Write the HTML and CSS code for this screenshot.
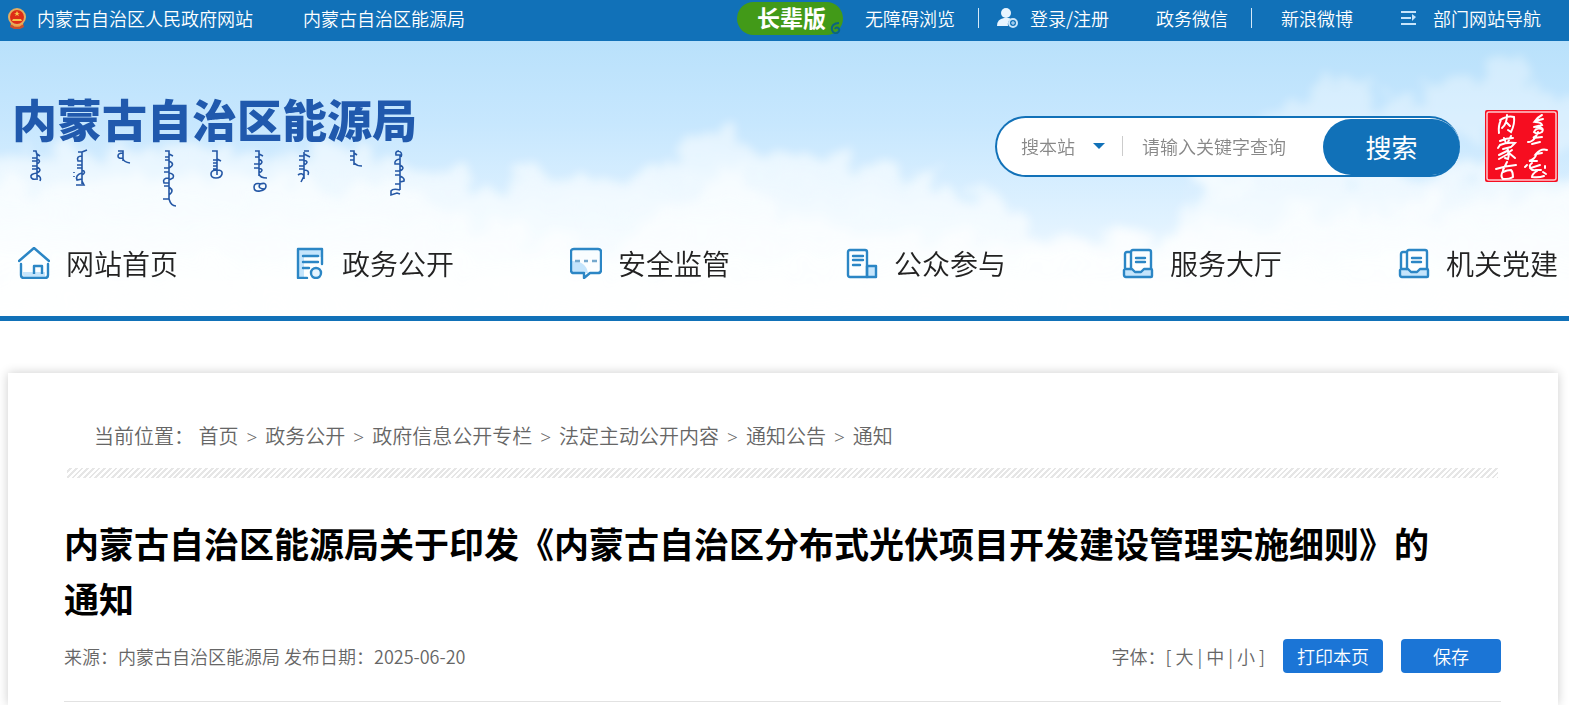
FILE: index.html
```
<!DOCTYPE html>
<html lang="zh-CN">
<head>
<meta charset="utf-8">
<title>内蒙古自治区能源局</title>
<link rel="stylesheet" href="styles.css">
</head>
<body>
    <div class="topbar">
        <svg class="emblem" viewBox="0 0 20 21">
            <path d="M4 15h12l1 4-4 2H7l-4-2z" fill="#c8502d"/>
            <circle cx="10" cy="9" r="9" fill="#e3ad62"/>
            <circle cx="10" cy="9" r="7" fill="#dd2c17"/>
            <path d="M10 3l1 2h2l-2 1 1 2-2-1-2 1 1-2-2-1h2zM6 11h8l1 2H5z" fill="#f6c34b"/>
            <path d="M4 16q6 4 12 0M7 18h6" fill="none" stroke="#f0a54a"/>
        </svg>
        <a class="gov" href="#">内蒙古自治区人民政府网站</a>
        <a class="bureau" href="#">内蒙古自治区能源局</a>
        <div class="toplinks">
            <a class="elder" href="#">长辈版
                <svg class="elder-mark" viewBox="0 0 12 12"><path d="M9 1C4 1 1 4 2 8s6 4 7 1-3-5-4-2" fill="none" stroke="#0b6480" stroke-width="2"/></svg>
            </a>
            <a class="barrier" href="#">无障碍浏览</a>
            <span class="bar"></span>
            <a class="login" href="#">
                <svg class="user-icon" viewBox="0 0 21 20">
                    <circle cx="9" cy="5" r="5" fill="#e8f5ff"/>
                    <path d="M0 18q0-7 7-8h4q2 0 3 1-4 2-3 7z" fill="#e8f5ff"/>
                    <circle cx="16" cy="15" r="4" fill="#1171b8" stroke="#cbe6fa" stroke-width="2"/>
                    <path d="M14 15h4M16 13v4" stroke="#cbe6fa"/>
                </svg>登录/注册</a>
            <a class="wechat" href="#">政务微信</a>
            <span class="bar"></span>
            <a class="weibo" href="#">新浪微博</a>
            <a class="sites" href="#">
                <svg class="menu-icon" viewBox="0 0 17 16"><path d="M1 2h15M1 8h10M1 14h15" stroke="#c8e5fb" stroke-width="2"/><path d="M12 4l4 3-4 4z" fill="#c8e5fb"/></svg>部门网站导航</a>
        </div>
    </div>

    <header class="header">
        <svg class="sky" viewBox="0 0 1569 275" preserveAspectRatio="none">
            <defs>
                <linearGradient id="air" x1="0" y1="0" x2="0" y2="1">
                    <stop offset="0" stop-color="#b9e1fb"/>
                    <stop offset=".3" stop-color="#c7e7fe"/>
                    <stop offset=".65" stop-color="#e0f2ff"/>
                    <stop offset="1" stop-color="#ffffff"/>
                </linearGradient>
                <linearGradient id="mist" x1="0" y1="0" x2="0" y2="1">
                    <stop offset="0" stop-color="#ffffff" stop-opacity=".45"/>
                    <stop offset=".4" stop-color="#fafdff" stop-opacity=".75"/>
                    <stop offset="1" stop-color="#ffffff"/>
                </linearGradient>
                <filter id="puff" x="-5%" y="-20%" width="110%" height="140%">
                    <feTurbulence type="fractalNoise" baseFrequency=".035" numOctaves="5" seed="6" result="noise"/>
                    <feDisplacementMap in="SourceGraphic" in2="noise" scale="60" xChannelSelector="R" yChannelSelector="G"/>
                    <feGaussianBlur stdDeviation="5"/>
                </filter>
            </defs>
            <rect width="1569" height="275" fill="url(#air)"/>
            <g filter="url(#puff)">
                <path d="M-40 120L80 112 200 106 290 114 350 104 400 118 450 128 490 150 540 132 580 128 640 142 680 100 700 98 725 90 760 112 800 112 860 122 900 132 960 150 1000 156 1040 196 1180 190 1200 140 1280 110 1340 136 1400 130 1620 130V310H-40z" fill="url(#mist)"/>
                <path d="M1200 150L1240 100 1270 68 1330 46 1390 58 1440 50 1490 28 1520 20 1540 50 1600 60V110L1480 90 1400 110 1300 130z" fill="#fff" opacity=".35"/>
                <path d="M-40 150L200 130 420 150 500 190 620 205 680 150 740 130 800 180 1060 210 1240 180 1620 150V320H-40z" fill="#fff" opacity=".45"/>
            </g>
        </svg>

        <div class="masthead">
            <a class="logo" href="#">
                <span class="logo-name">内蒙古自治区能源局</span>
                <svg class="logo-script" viewBox="0 0 420 60" fill="none" stroke="#2457a5" stroke-width="1.6">
                    <path d="M33 3h3l1 4v25M37 6l3 2M32 10h5M32 13h5M37 11q5 2 0 5M32 18h5M32 21h5M37 19q6 3 0 6M37 25q-7 1-6 4t5 2M37 27q5 2 3 6"/>
                    <path d="M78 4h4v32M82 4l5-2M82 8q-6 0-4 5h4M77 17h5M77 20h5M82 22q5 2 0 5M82 25q-7 2-5 7l5-1M76 37h8l-2-4M74 24v1M74 28v1"/>
                    <path d="M118 3h5v10M123 5q-5 0-5 3t5 2M123 11q1 3 7 4"/>
                    <path d="M165 3h4v48M169 6l4 2M165 9h4M165 12h4M169 13q7 3 0 7M164 20h5M164 24h5M169 25q6 1 4 5l-4 2M169 30q-7 0-5 5h5M164 38h5M169 39q6 4 0 8M163 51h6q2 7 7 7"/>
                    <path d="M212 3h5v24M217 5v6l4 2M213 12h4M213 15h4M213 18h4M213 21h4M217 22q-6 0-6 4t5 4 6-4-5-4"/>
                    <path d="M255 3h4v25M259 6l4 2M255 9h4M259 11q6 3 0 6M254 16h5M254 20h5M259 20q6 2 0 5M259 26q1 4 8 4M262 36q-8-2-8 3t6 4 6-5-6-2q-3 5 5 5"/>
                    <path d="M304 3h5M304 4v27M304 6l6 3M299 8h5M299 12h5M304 12q6 2 0 5M299 18h5M299 21h5M304 22q6 0 4 5M298 27q4-3 6 1l-3 6"/>
                    <path d="M350 3h4v14M354 5l3 2M350 8h4M350 12h4M354 15q3 3 8 3"/>
                    <path d="M399 3q-4 0-3 4h4v35M398 3q5 1 3 6M400 11q-6 1-5 5h5M400 17q6 3 0 6M395 23h5M395 27h5M400 28q5 2 4 5l-4 1M395 36h5M400 42q-7-2-9 1v4l6-2 3 1"/>
                </svg>
            </a>
            <div class="tools">
                <form class="search">
                    <span class="scope">
                        <select aria-label="搜索范围">
                            <option>搜本站</option>
                        </select>
                    </span>
                    <input type="text" placeholder="请输入关键字查询" aria-label="关键字">
                    <button type="button">搜索</button>
                </form>
                <svg class="seal" viewBox="0 0 73 72" fill="none" stroke="#fff" stroke-linecap="round">
                    <rect width="73" height="72" rx="2" fill="#f60d20" stroke="none"/>
                    <rect x="2" y="2" width="69" height="68" rx="2" stroke="#ffc9cd" stroke-width="1.5"/>
                    <!-- left column -->
                    <path stroke-width="2" d="M16 10q-3 6-2 13M15 10q8-5 14-3 1 7-3 15l-3-2M22 5q0 9-5 13M21 12l4 4"/>
                    <path stroke-width="2" d="M15 31q6-3 13-3M19 28l2 5M26 26l-3 6M15 35l-2 3M15 35q7-3 15-2l-3 3M18 39l8-2M22 38q3 5 1 11l-3-1M22 41l-8 4M23 44l-9 5M27 40l-4 3M24 43l6 5"/>
                    <path stroke-width="2" d="M11 59q9-3 20-4M22 52l-4 8M18 61q-3 5 0 8 7 0 10-2 0-5-2-7-4 0-8 2"/>
                    <!-- right column -->
                    <path stroke-width="2" d="M57 5q-4 2-7 6l8-2M50 12q6 0 7 3l-8 2M51 17q9 0 6 5-5 3-8 0 2-5 8-3M53 22q-1 4-5 6l9-1M50 28q-3 4-7 4M47 34l8-2"/>
                    <path stroke-width="2" d="M62 40q-6-2-11 4l6-1M51 45q-1 4-7 6l8 0M47 53q-4 3-1 5l9-3M45 58q2 3 6 2l5 0M42 55l-2 2M52 61q-5 3-5 6 7 1 12-1M60 56v2M58 62l3 2"/>
                </svg>
            </div>
        </div>

        <nav class="nav">
            <a href="#">
                <svg viewBox="0 0 32 32" fill="none" stroke="#2b86c5" stroke-width="2.4" stroke-linecap="round" stroke-linejoin="round">
                    <path d="M5 25h22v5H7q-2 0-2-3z" fill="#c5e5fc" stroke="none"/>
                    <path d="M1 14L16 1l15 13M3 17v11q0 3 3 3h21q3 0 3-3V17"/><path d="M16 27v-8h8v8" stroke-linecap="butt"/>
                </svg>网站首页</a>
            <a href="#">
                <svg viewBox="0 0 32 32" fill="none" stroke="#2b86c5" stroke-width="2.4" stroke-linecap="round" stroke-linejoin="round">
                    <path d="M5 3h5v27H5z" fill="#c5e5fc" stroke="none"/><path d="M6 2h22v8H6z" fill="#c5e5fc" stroke="none"/>
                    <path d="M28 17V2H4v29h9M9 9h15M9 15h15M9 21h6"/><circle cx="22" cy="26" r="5" fill="#e5f4ff"/>
                </svg>政务公开</a>
            <a href="#">
                <svg viewBox="0 0 32 32" fill="none" stroke="#2b86c5" stroke-width="2.4" stroke-linejoin="round">
                    <path d="M2 14q14 0 16 12h-4l-1 4v-4H2z" fill="#c5e5fc" stroke="none"/>
                    <path d="M4 2h24q3 0 3 3v18q0 3-3 3H20l-6 5v-5H4q-3 0-3-3V5q0-3 3-3z"/><path d="M5 14h5M14 14h4M22 14h5" stroke="#76a9cd"/>
                </svg>安全监管</a>
            <a href="#">
                <svg viewBox="0 0 32 32" fill="none" stroke="#2b86c5" stroke-width="2.4" stroke-linecap="round" stroke-linejoin="round">
                    <path d="M21 19h9v11h-9z" fill="#c5e5fc"/>
                    <path d="M4 3h15q2 0 2 2v25H4q-2 0-2-2V5q0-2 2-2zM7 9h10M7 13h10M7 18h7"/>
                </svg>公众参与</a>
            <a href="#">
                <svg viewBox="0 0 32 32" fill="none" stroke="#2b86c5" stroke-width="2.4" stroke-linecap="round" stroke-linejoin="round">
                    <path d="M3 22h7l3 3h6l3-3h7q1 0 1 1v6q0 1-1 1H4q-2 0-2-2v-5z" fill="#c5e5fc"/>
                    <path d="M9 22V5q0-2 2-2h16q2 0 2 2v16M3 21V7q0-2 2-2h4M14 11h9M14 15h9"/>
                </svg>服务大厅</a>
            <a href="#">
                <svg viewBox="0 0 32 32" fill="none" stroke="#2b86c5" stroke-width="2.4" stroke-linecap="round" stroke-linejoin="round">
                    <path d="M3 22h7l3 3h6l3-3h7q1 0 1 1v6q0 1-1 1H4q-2 0-2-2v-5z" fill="#c5e5fc"/>
                    <path d="M9 22V5q0-2 2-2h16q2 0 2 2v16M3 21V7q0-2 2-2h4M14 11h9M14 15h9"/>
                </svg>机关党建</a>
        </nav>
    </header>

    <main class="article">
        <div class="crumbs">
            <span class="crumbs-label">当前位置：</span>
            <a href="#">首页</a><i>&gt;</i><a href="#">政务公开</a><i>&gt;</i><a href="#">政府信息公开专栏</a><i>&gt;</i><a href="#">法定主动公开内容</a><i>&gt;</i><a href="#">通知公告</a><i>&gt;</i><a href="#">通知</a>
        </div>
        <div class="hatch"></div>
        <h1>内蒙古自治区能源局关于印发《内蒙古自治区分布式光伏项目开发建设管理实施细则》的通知</h1>
        <div class="meta">
            <span>来源：内蒙古自治区能源局 发布日期：2025-06-20</span>
            <div class="actions">
                <span>字体：[ <a href="#">大</a> | <a href="#">中</a> | <a href="#">小</a> ]</span>
                <button type="button">打印本页</button>
                <button type="button">保存</button>
            </div>
        </div>
    </main>
</body>
</html>
```
FILE: styles.css
```
* {
    box-sizing: border-box;
}

body {
    margin: 0;
    min-height: 100vh;
    display: flex;
    flex-direction: column;
    font-family: "Noto Sans CJK SC", sans-serif;
    font-weight: 350;
    font-size: 18px;
    color: #666;
    background-color: #fff;
}

a {
    color: inherit;
    text-decoration: none;
}

button, input, select {
    font-family: inherit;
    font-weight: inherit;
    border: none;
    padding: 0;
}

button {
    cursor: pointer;
}

.topbar {
    display: flex;
    align-items: center;
    height: 41px;
    padding: 0 28px 5px 7px;
    background-color: #1171b8;
    color: #fff;
    white-space: nowrap;
}

.emblem {
    width: 20px;
    height: 21px;
    margin-right: 10px;
}

.bureau {
    margin-left: 50px;
}

.toplinks {
    display: flex;
    align-items: center;
    margin-left: auto;
}

.elder {
    position: relative;
    width: 106px;
    height: 33px;
    padding-left: 20px;
    border-radius: 17px;
    background-color: #429a18;
    font-size: 23px;
    font-weight: 700;
    line-height: 30px;
}

.elder-mark {
    position: absolute;
    right: 1px;
    bottom: 1px;
    width: 12px;
    height: 12px;
}

.barrier {
    margin: 0 23px 0 22px;
}

.bar {
    width: 1px;
    height: 20px;
    background-color: #d5e9f8;
}

.login, .sites {
    display: flex;
    align-items: center;
}

.login {
    margin: 0 47px 0 18px;
}

.user-icon {
    width: 21px;
    height: 20px;
    margin-right: 12px;
}

.wechat {
    margin-right: 23px;
}

.weibo {
    margin: 0 47px 0 29px;
}

.menu-icon {
    width: 17px;
    height: 16px;
    margin-right: 16px;
}

.header {
    position: relative;
    padding: 53px 11px 32px 12px;
    border-bottom: 5px solid #1171b8;
}

/* clouds behind the whole header */
.sky {
    position: absolute;
    top: 0;
    left: 0;
    width: 100%;
    height: 100%;
}

.masthead, .nav {
    position: relative;
    display: flex;
    justify-content: space-between;
}

.logo-name {
    display: block;
    font-size: 45px;
    font-weight: 900;
    line-height: 50px;
    color: #2059ad;
}

.logo-script {
    display: block;
    width: 420px;
    height: 60px;
    margin: 4px 0 0 -12px;
}

.tools {
    display: flex;
    align-items: center;
    align-self: flex-start;
    gap: 25px;
    margin-top: 16px;
}

.search {
    display: flex;
    align-items: center;
    width: 465px;
    height: 61px;
    padding-left: 24px;
    border: 2px solid #1171b8;
    border-right: none;
    border-radius: 31px;
    background-color: #fff;
}

.scope {
    position: relative;
    width: 102px;
    border-right: 1px solid #ccc;
    line-height: 20px;
}

.scope::after {
    content: "";
    position: absolute;
    top: 7px;
    right: 17px;
    border: 6px solid transparent;
    border-top-color: #1171b8;
    border-bottom: none;
    pointer-events: none;
}

.scope select {
    appearance: none;
    width: 100%;
    height: 20px;
    font-size: 18px;
    line-height: 20px;
    color: #888;
    background: none;
}

.search input {
    flex: 1;
    min-width: 0;
    height: 40px;
    padding-left: 19px;
    font-size: 18px;
    color: #666;
    background: none;
    outline: none;
}

.search input::placeholder {
    color: #888;
}

.search button {
    align-self: flex-end;
    width: 137px;
    height: 56px;
    border-radius: 28px;
    background-color: #1171b8;
    color: #fff;
    font-size: 26px;
    font-weight: 400;
}

.seal {
    width: 73px;
    height: 72px;
}

.nav {
    margin-top: 35px;
    padding: 0 0 1px 6px;
}

.nav a {
    display: flex;
    align-items: center;
    gap: 16px;
    font-size: 28px;
    line-height: 40px;
    color: #222;
}

.nav svg {
    width: 32px;
    height: 32px;
}

.article {
    flex: 1;
    margin: 52px 11px 0 8px;
    padding: 48px 57px 0 56px;
    background-color: #fff;
    box-shadow: 0 0 10px rgba(0, 0, 0, 0.2);
}

.crumbs {
    padding-left: 30px;
    font-size: 20px;
    line-height: 30px;
}

.crumbs i {
    margin: 0 8px;
    font-family: "Noto Sans", sans-serif;
    font-style: normal;
    font-size: 19px;
}

.hatch {
    height: 10px;
    margin: 16px 3px 0;
    background: repeating-linear-gradient(135deg, #fff 0, #fff 2px, #e6e6e6 2px, #e6e6e6 4px);
}

.article h1 {
    margin: 37px 0 14px;
    padding-right: 60px;
    font-size: 35px;
    font-weight: 700;
    line-height: 55px;
    color: #000;
}

.meta {
    display: flex;
    align-items: center;
    justify-content: space-between;
    padding-bottom: 28px;
    border-bottom: 1px solid #e2e2e2;
}

.actions {
    display: flex;
    align-items: center;
    gap: 18px;
}

.actions button {
    width: 100px;
    height: 34px;
    border-radius: 4px;
    background-color: #1b75d6;
    color: #fff;
    font-size: 18px;
}
```
